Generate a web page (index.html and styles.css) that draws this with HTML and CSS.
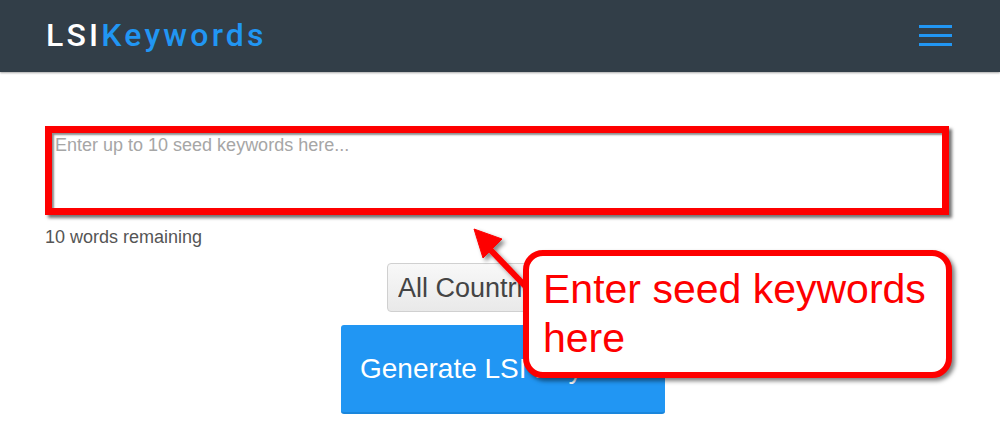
FILE: index.html
```html
<!DOCTYPE html>
<html>
<head>
    <title>LSI Keywords</title>
    <meta charset="UTF-8">
    <link rel="stylesheet" href="styles.css">
</head>
<body>
    <div class="navbar">
        <div class="logo"><span class="logo-lsi">LSI</span><span class="logo-kw">Keywords</span></div>
        <button class="menu-button" title="Menu">
            <span></span><span></span><span></span>
        </button>
    </div>

    <div class="page">
        <div class="form">
            <textarea class="seed-input" placeholder="Enter up to 10 seed keywords here..."></textarea>
            <div class="words-left">10 words remaining</div>

            <div class="controls">
                <select class="country-select">
                    <option>All Countries</option>
                </select>
                <button class="generate-button">Generate LSI Keywords</button>
            </div>
        </div>

        <!-- annotation overlay -->
        <svg class="callout-arrow" width="120" height="120" viewBox="0 0 120 120">
            <defs>
                <filter id="arrow-shadow" x="-30%" y="-30%" width="160%" height="160%">
                    <feDropShadow dx="3" dy="3" stdDeviation="2" flood-color="#000" flood-opacity="0.45"/>
                </filter>
            </defs>
            <g filter="url(#arrow-shadow)" fill="#fe0000" stroke="#fe0000">
                <line x1="98" y1="100" x2="52" y2="52" stroke-width="6"/>
                <polygon points="44,40 53,69 72,50" stroke-width="1"/>
            </g>
        </svg>
        <div class="callout">Enter seed keywords<br>here</div>
    </div>
</body>
</html>
```

FILE: styles.css
```css
:root {
    --nav-bg: #323e48;
    --brand-blue: #2196f3;
    --note-red: #fe0000;
    --text-muted: #555555;
}

body {
    margin: 0;
    padding: 0;
    font-family: "Liberation Sans", Arial, sans-serif;
    background-color: #ffffff;
    overflow: hidden;
}

.navbar {
    height: 72px;
    background-color: var(--nav-bg);
    display: flex;
    align-items: center;
    justify-content: space-between;
    padding: 0 48px 0 46px;
    box-shadow: 0 1px 2px rgba(0,0,0,0.35);
    position: relative;
    z-index: 1;
}

.logo {
    font-family: Roboto, "Liberation Sans", sans-serif;
    font-size: 32px;
    font-weight: 500;
    letter-spacing: 3.2px;
    margin-top: -2px;
}

.logo-lsi {
    color: #ffffff;
}

.logo-kw {
    color: var(--brand-blue);
}

.menu-button {
    width: 33px;
    height: 21px;
    border: none;
    background: transparent;
    padding: 0;
    display: flex;
    flex-direction: column;
    justify-content: space-between;
    margin-top: -1px;
}

.menu-button span {
    display: block;
    height: 3px;
    background-color: var(--brand-blue);
}

.page {
    position: relative;
    padding: 54px 51px 0 45px;
}

.form {
    display: flex;
    flex-direction: column;
    position: relative;
    z-index: 0;
}

.seed-input {
    height: 89px;
    box-sizing: border-box;
    border: 7px solid var(--note-red);
    padding: 2px 3px;
    font-family: "Liberation Sans", Arial, sans-serif;
    font-size: 18px;
    resize: none;
    outline: none;
    box-shadow: 3px 3px 3px rgba(0,0,0,0.55), inset 2px 2px 2px rgba(0,0,0,0.45);
}

.seed-input::placeholder {
    color: #a6a6a6;
}

.words-left {
    margin-top: 12px;
    font-size: 18px;
    color: var(--text-muted);
}

.controls {
    display: flex;
    flex-direction: column;
    align-items: center;
    gap: 13px;
    margin-top: 15px;
    padding-left: 12px;
}

.country-select {
    width: 232px;
    height: 49px;
    -webkit-appearance: none;
    appearance: none;
    border: 1px solid #d0d0d0;
    border-radius: 4px;
    background: linear-gradient(#f8f8f8, #e9e9e9);
    font-family: "Liberation Sans", Arial, sans-serif;
    font-size: 27px;
    color: #444444;
    padding: 0 10px;
}

.generate-button {
    width: 324px;
    height: 89px;
    border: none;
    border-bottom: 2px solid #1a86dc;
    border-radius: 3px;
    background-color: var(--brand-blue);
    color: #ffffff;
    font-family: "Liberation Sans", Arial, sans-serif;
    font-size: 28px;
    text-align: left;
    white-space: nowrap;
    overflow: hidden;
    padding: 0 19px;
}

/* Annotation over the form */
.callout-arrow {
    position: absolute;
    left: 430px;
    top: 117px;
    z-index: 2;
}

.callout {
    position: absolute;
    left: 523px;
    top: 178px;
    width: 429px;
    height: 128px;
    box-sizing: border-box;
    border: 6px solid var(--note-red);
    border-radius: 20px;
    background-color: #ffffff;
    box-shadow: 3px 3px 4px rgba(0,0,0,0.5);
    color: var(--note-red);
    font-size: 41px;
    line-height: 49px;
    padding: 9px 14px;
    white-space: nowrap;
    z-index: 3;
}
```
